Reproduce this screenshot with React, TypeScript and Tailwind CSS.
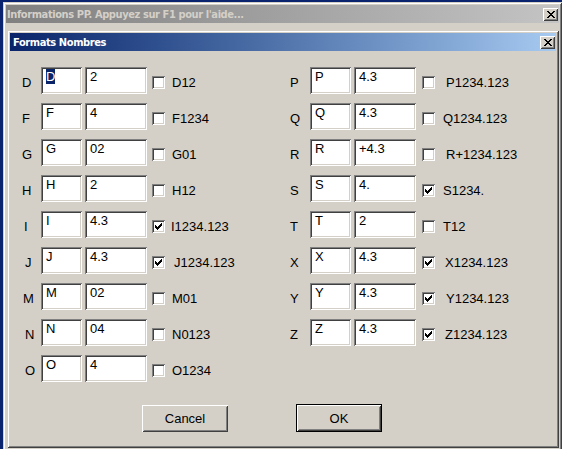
import React from "react";

type Row = {
  k: string;
  a: string;
  b: string;
  on: boolean;
  lab: string;
  kx: string;
  lx: string;
  sel?: boolean;
};

const leftRows: Row[] = [
  { k: "D", a: "D", b: "2", on: false, lab: "D12", kx: "pl-0", lx: "ml-[7px]", sel: true },
  { k: "F", a: "F", b: "4", on: false, lab: "F1234", kx: "pl-0", lx: "ml-[7px]" },
  { k: "G", a: "G", b: "02", on: false, lab: "G01", kx: "pl-0", lx: "ml-[7px]" },
  { k: "H", a: "H", b: "2", on: false, lab: "H12", kx: "pl-0", lx: "ml-[7px]" },
  { k: "I", a: "I", b: "4.3", on: true, lab: "I1234.123", kx: "pl-[2px]", lx: "ml-[6px]" },
  { k: "J", a: "J", b: "4.3", on: true, lab: "J1234.123", kx: "pl-[3px]", lx: "ml-[9px]" },
  { k: "M", a: "M", b: "02", on: false, lab: "M01", kx: "pl-[1px]", lx: "ml-[7px]" },
  { k: "N", a: "N", b: "04", on: false, lab: "N0123", kx: "pl-[3px]", lx: "ml-[7px]" },
  { k: "O", a: "O", b: "4", on: false, lab: "O1234", kx: "pl-[3px]", lx: "ml-[7px]" },
];

const rightRows: Row[] = [
  { k: "P", a: "P", b: "4.3", on: false, lab: "P1234.123", kx: "pl-0", lx: "ml-[11px]" },
  { k: "Q", a: "Q", b: "4.3", on: false, lab: "Q1234.123", kx: "pl-0", lx: "ml-[8px]" },
  { k: "R", a: "R", b: "+4.3", on: false, lab: "R+1234.123", kx: "pl-0", lx: "ml-[11px]" },
  { k: "S", a: "S", b: "4.", on: true, lab: "S1234.", kx: "pl-0", lx: "ml-[8px]" },
  { k: "T", a: "T", b: "2", on: false, lab: "T12", kx: "pl-0", lx: "ml-[8px]" },
  { k: "X", a: "X", b: "4.3", on: true, lab: "X1234.123", kx: "pl-0", lx: "ml-[10px]" },
  { k: "Y", a: "Y", b: "4.3", on: true, lab: "Y1234.123", kx: "pl-0", lx: "ml-[11px]" },
  { k: "Z", a: "Z", b: "4.3", on: true, lab: "Z1234.123", kx: "pl-0", lx: "ml-[10px]" },
];

const sunken =
  "bg-white shadow-[inset_1px_1px_0_#808080,inset_-1px_-1px_0_#ffffff,inset_2px_2px_0_#404040,inset_-2px_-2px_0_#d4d0c8]";

const raised =
  "bg-[#d4d0c8] shadow-[inset_1px_1px_0_#ffffff,inset_-1px_-1px_0_#404040,inset_2px_2px_0_#d4d0c8,inset_-2px_-2px_0_#808080]";

function CloseGlyph() {
  return (
    <svg width="8" height="7" viewBox="0 0 8 7" shapeRendering="crispEdges">
      <path
        fill="#000"
        d="M0 0h2v1H0zM6 0h2v1H6zM1 1h2v1H1zM5 1h2v1H5zM2 2h4v1H2zM3 3h2v1H3zM2 4h4v1H2zM1 5h2v1H1zM5 5h2v1H5zM0 6h2v1H0zM6 6h2v1H6z"
      />
    </svg>
  );
}

function CloseButton() {
  return (
    <div className={`${raised} w-[15px] h-[13px] flex items-center justify-center`}>
      <CloseGlyph />
    </div>
  );
}

function CheckBox({ on }: { on: boolean }) {
  return (
    <div className={`${sunken} w-[13px] h-[13px] shrink-0 relative`}>
      {on && (
        <svg
          className="absolute left-[3px] top-[3px]"
          width="7"
          height="7"
          viewBox="0 0 7 7"
          shapeRendering="crispEdges"
        >
          <path
            fill="#000"
            d="M6 0h1v3H6zM5 1h1v3H5zM0 2h1v3H0zM4 2h1v3H4zM1 3h1v3H1zM3 3h1v3H3zM2 4h1v3H2z"
          />
        </svg>
      )}
    </div>
  );
}

function Field({ value, w, sel }: { value: string; w: string; sel?: boolean }) {
  return (
    <div className={`${sunken} ${w} h-[27px] shrink-0 pl-[5px] pt-[2px] text-[13px] leading-[15px] text-black`}>
      {sel ? <span className="bg-[#0a246a] text-white">{value}</span> : value}
    </div>
  );
}

function FormatRow({ row, side }: { row: Row; side: "l" | "r" }) {
  const right = side === "r";
  return (
    <div className="flex h-[27px]">
      <span className={`${right ? "w-[20px]" : "w-[19px]"} ${row.kx} shrink-0 mt-[8px] text-[13px] leading-[15px]`}>
        {row.k}
      </span>
      <Field value={row.a} w="w-[41px]" sel={row.sel} />
      <div className="ml-[3px]">
        <Field value={row.b} w="w-[62px]" />
      </div>
      <div className={`${right ? "ml-[6px]" : "ml-[5px]"} mt-[9px]`}>
        <CheckBox on={row.on} />
      </div>
      <span className={`${row.lx} mt-[8px] text-[13px] leading-[15px] whitespace-nowrap`}>{row.lab}</span>
    </div>
  );
}

export default function App() {
  return (
    <div className="w-[562px] h-[449px] overflow-hidden bg-[#0b2470] pl-[3px] pt-[2px] font-['Liberation_Sans',Arial,sans-serif] text-black">
      {/* outer (inactive) window */}
      <div className="w-[559px] h-[470px] bg-[#d4d0c8] p-[3px] shadow-[inset_1px_1px_0_#d4d0c8,inset_-1px_0_0_#404040,inset_2px_2px_0_#ffffff,inset_-2px_0_0_#808080]">
        <div className="h-[18px] flex items-center justify-between bg-gradient-to-r from-[#808080] to-[#c4c4c4] pl-[1px] pr-[1px]">
          <span className="font-['DejaVu_Sans_Condensed','DejaVu_Sans',sans-serif] font-bold text-[11px] leading-[13px] tracking-[-0.4px] text-[#d4d0c8] whitespace-nowrap">
            Informations PP. Appuyez sur F1 pour l'aide...
          </span>
          <CloseButton />
        </div>

        {/* dialog */}
        <div className="mt-[7px] ml-[1px] w-[552px] h-[418px] p-[3px] bg-[#d4d0c8] shadow-[inset_1px_1px_0_#d4d0c8,inset_-1px_-1px_0_#404040,inset_2px_2px_0_#ffffff,inset_-2px_-2px_0_#808080]">
          <div className="h-[18px] flex items-center justify-between bg-gradient-to-r from-[#0a246a] to-[#a6caf0] pl-[3px] pr-[1px]">
            <span className="font-['DejaVu_Sans_Condensed','DejaVu_Sans',sans-serif] font-bold text-[11px] leading-[13px] tracking-[-0.4px] text-white whitespace-nowrap">
              Formats Nombres
            </span>
            <CloseButton />
          </div>

          <div className="pt-[16px]">
            <div className="flex">
              <div className="w-[280px] pl-[12px] flex flex-col gap-[9px]">
                {leftRows.map((r) => (
                  <FormatRow key={r.k} row={r} side="l" />
                ))}
              </div>
              <div className="flex flex-col gap-[9px]">
                {rightRows.map((r) => (
                  <FormatRow key={r.k} row={r} side="r" />
                ))}
              </div>
            </div>

            <div className="mt-[22px] pl-[132px] flex items-end gap-[68px]">
              <button className={`${raised} w-[86px] h-[27px] text-[13px] leading-[15px] text-black`}>
                Cancel
              </button>
              <button className="w-[86px] h-[28px] border border-black">
                <div className={`${raised} w-full h-full flex items-center justify-center text-[13px] leading-[15px] text-black`}>
                  OK
                </div>
              </button>
            </div>
          </div>
        </div>
      </div>
    </div>
  );
}
